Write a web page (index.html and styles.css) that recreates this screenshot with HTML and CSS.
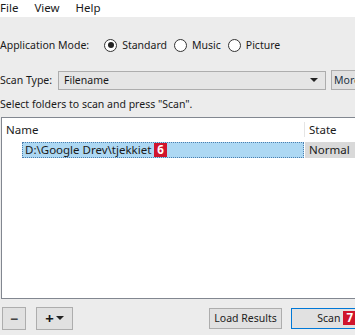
FILE: index.html
```html
<!DOCTYPE html>
<html lang="en">
<head>
    <meta charset="UTF-8">
    <title>Scanner</title>
    <link rel="stylesheet" href="styles.css">
</head>
<body>
    <div class="menubar">
        <span>File</span>
        <span>View</span>
        <span>Help</span>
    </div>

    <div class="main">
        <div class="mode-row">
            <span class="label">Application Mode:</span>
            <label class="radio"><span class="dot checked"></span>Standard</label>
            <label class="radio"><span class="dot"></span>Music</label>
            <label class="radio"><span class="dot"></span>Picture</label>
        </div>

        <div class="type-row">
            <span class="label">Scan Type:</span>
            <div class="combo">
                <span>Filename</span>
                <span class="arrow"></span>
            </div>
            <div class="btn more">More</div>
        </div>

        <div class="hint">Select folders to scan and press "Scan".</div>

        <div class="list">
            <div class="list-head">
                <div class="col-name">Name</div>
                <div class="col-state">State</div>
            </div>
            <div class="list-row">
                <div class="col-name">
                    <span class="selected">D:\Google Drev\tjekkiet <span class="badge">6</span></span>
                </div>
                <div class="col-state state-cell">Normal</div>
            </div>
        </div>

        <div class="bottom">
            <div class="btn small">&minus;</div>
            <div class="btn add">+<span class="arrow"></span></div>
            <div class="spacer"></div>
            <div class="btn load">Load Results</div>
            <div class="btn scan">Scan <span class="badge">7</span></div>
        </div>
    </div>
</body>
</html>
```

FILE: styles.css
```css
body {
    margin: 0;
    font-family: "Noto Sans", "Open Sans", sans-serif;
    font-size: 10.5px;
    color: #1a1a1a;
    background-color: #ececec;
    overflow: hidden;
    white-space: nowrap;
}
.menubar {
    background-color: #fff;
    height: 17px;
    display: flex;
    gap: 16px;
    font-size: 11.5px;
    line-height: 15px;
}
.mode-row {
    display: flex;
    align-items: center;
    height: 22px;
    margin-top: 17px;
}
.label {
    margin-right: 15px;
}
.radio {
    display: flex;
    align-items: center;
    margin-right: 7px;
}
.dot {
    width: 11px;
    height: 11px;
    border: 1.5px solid #333;
    border-radius: 50%;
    margin-right: 5px;
    background-color: #fff;
    position: relative;
}
.dot.checked::after {
    content: "";
    position: absolute;
    left: 2.5px;
    top: 2.5px;
    width: 6px;
    height: 6px;
    border-radius: 50%;
    background-color: #222;
}
.type-row {
    display: flex;
    align-items: center;
    margin-top: 14px;
    height: 20px;
}
.type-row > * {
    flex-shrink: 0;
}
.type-row .label {
    width: 58px;
    margin-right: 0;
}
.combo {
    width: 268px;
    height: 19px;
    border: 1px solid #adadad;
    background-color: #e5e5e5;
    display: flex;
    align-items: center;
    justify-content: space-between;
    padding: 0 5px;
    box-sizing: border-box;
}
.arrow {
    width: 0;
    height: 0;
    border-left: 4px solid transparent;
    border-right: 4px solid transparent;
    border-top: 4px solid #222;
}
.combo .arrow {
    margin-right: 2px;
}
.btn {
    border: 1px solid #adadad;
    background-color: #e1e1e1;
    display: flex;
    align-items: center;
    justify-content: center;
    box-sizing: border-box;
}
.more {
    margin-left: 5px;
    height: 20px;
    width: 40px;
    justify-content: flex-start;
    padding-left: 2px;
    color: #234;
}
.hint {
    margin-top: 7px;
    height: 14px;
    line-height: 14px;
}
.list {
    margin-top: 6px;
    margin-left: 1px;
    height: 180px;
    background-color: #fff;
    border: 1px solid #828790;
    border-right: none;
}
.list-head, .list-row {
    display: flex;
}
.list-head {
    height: 23px;
    align-items: center;
    font-size: 11.5px;
}
.col-name {
    width: 298px;
    padding-left: 4px;
    border-right: 1px solid #e5e5e5;
}
.col-state {
    flex: 1;
    padding-left: 4px;
}
.list-row {
    height: 16px;
    margin-top: 1px;
    font-size: 11.5px;
    line-height: 16px;
}
.list-row .col-name {
    padding-left: 20px;
    width: 282px;
    border-right: none;
}
.selected {
    display: block;
    background-color: #add8f3;
    border: 1px dotted #4a7fb0;
    padding-left: 2px;
    height: 14px;
    line-height: 14px;
}
.state-cell {
    background-color: #d9d9d9;
    margin-left: 1px;
}
.badge {
    display: inline-block;
    background-color: #d0142c;
    color: #fff;
    font-weight: bold;
    font-size: 11.5px;
    line-height: 14px;
    padding: 0 3px;
}
.bottom {
    display: flex;
    align-items: center;
    margin-top: 7px;
    height: 24px;
    padding-left: 2px;
}
.small {
    width: 24px;
    height: 23px;
    font-size: 14px;
    font-weight: bold;
    color: #444;
}
.add {
    width: 37px;
    height: 23px;
    margin-left: 10px;
    font-size: 15px;
    font-weight: bold;
    gap: 2px;
}
.spacer {
    flex: 1;
}
.load {
    width: 73px;
    height: 21px;
    color: #222;
}
.scan {
    margin-left: 9px;
    width: 66px;
    height: 21px;
    border: 1px solid #0078d7;
    justify-content: flex-end;
    margin-right: -2px;
}
.scan .badge {
    margin-left: 3px;
}
```
